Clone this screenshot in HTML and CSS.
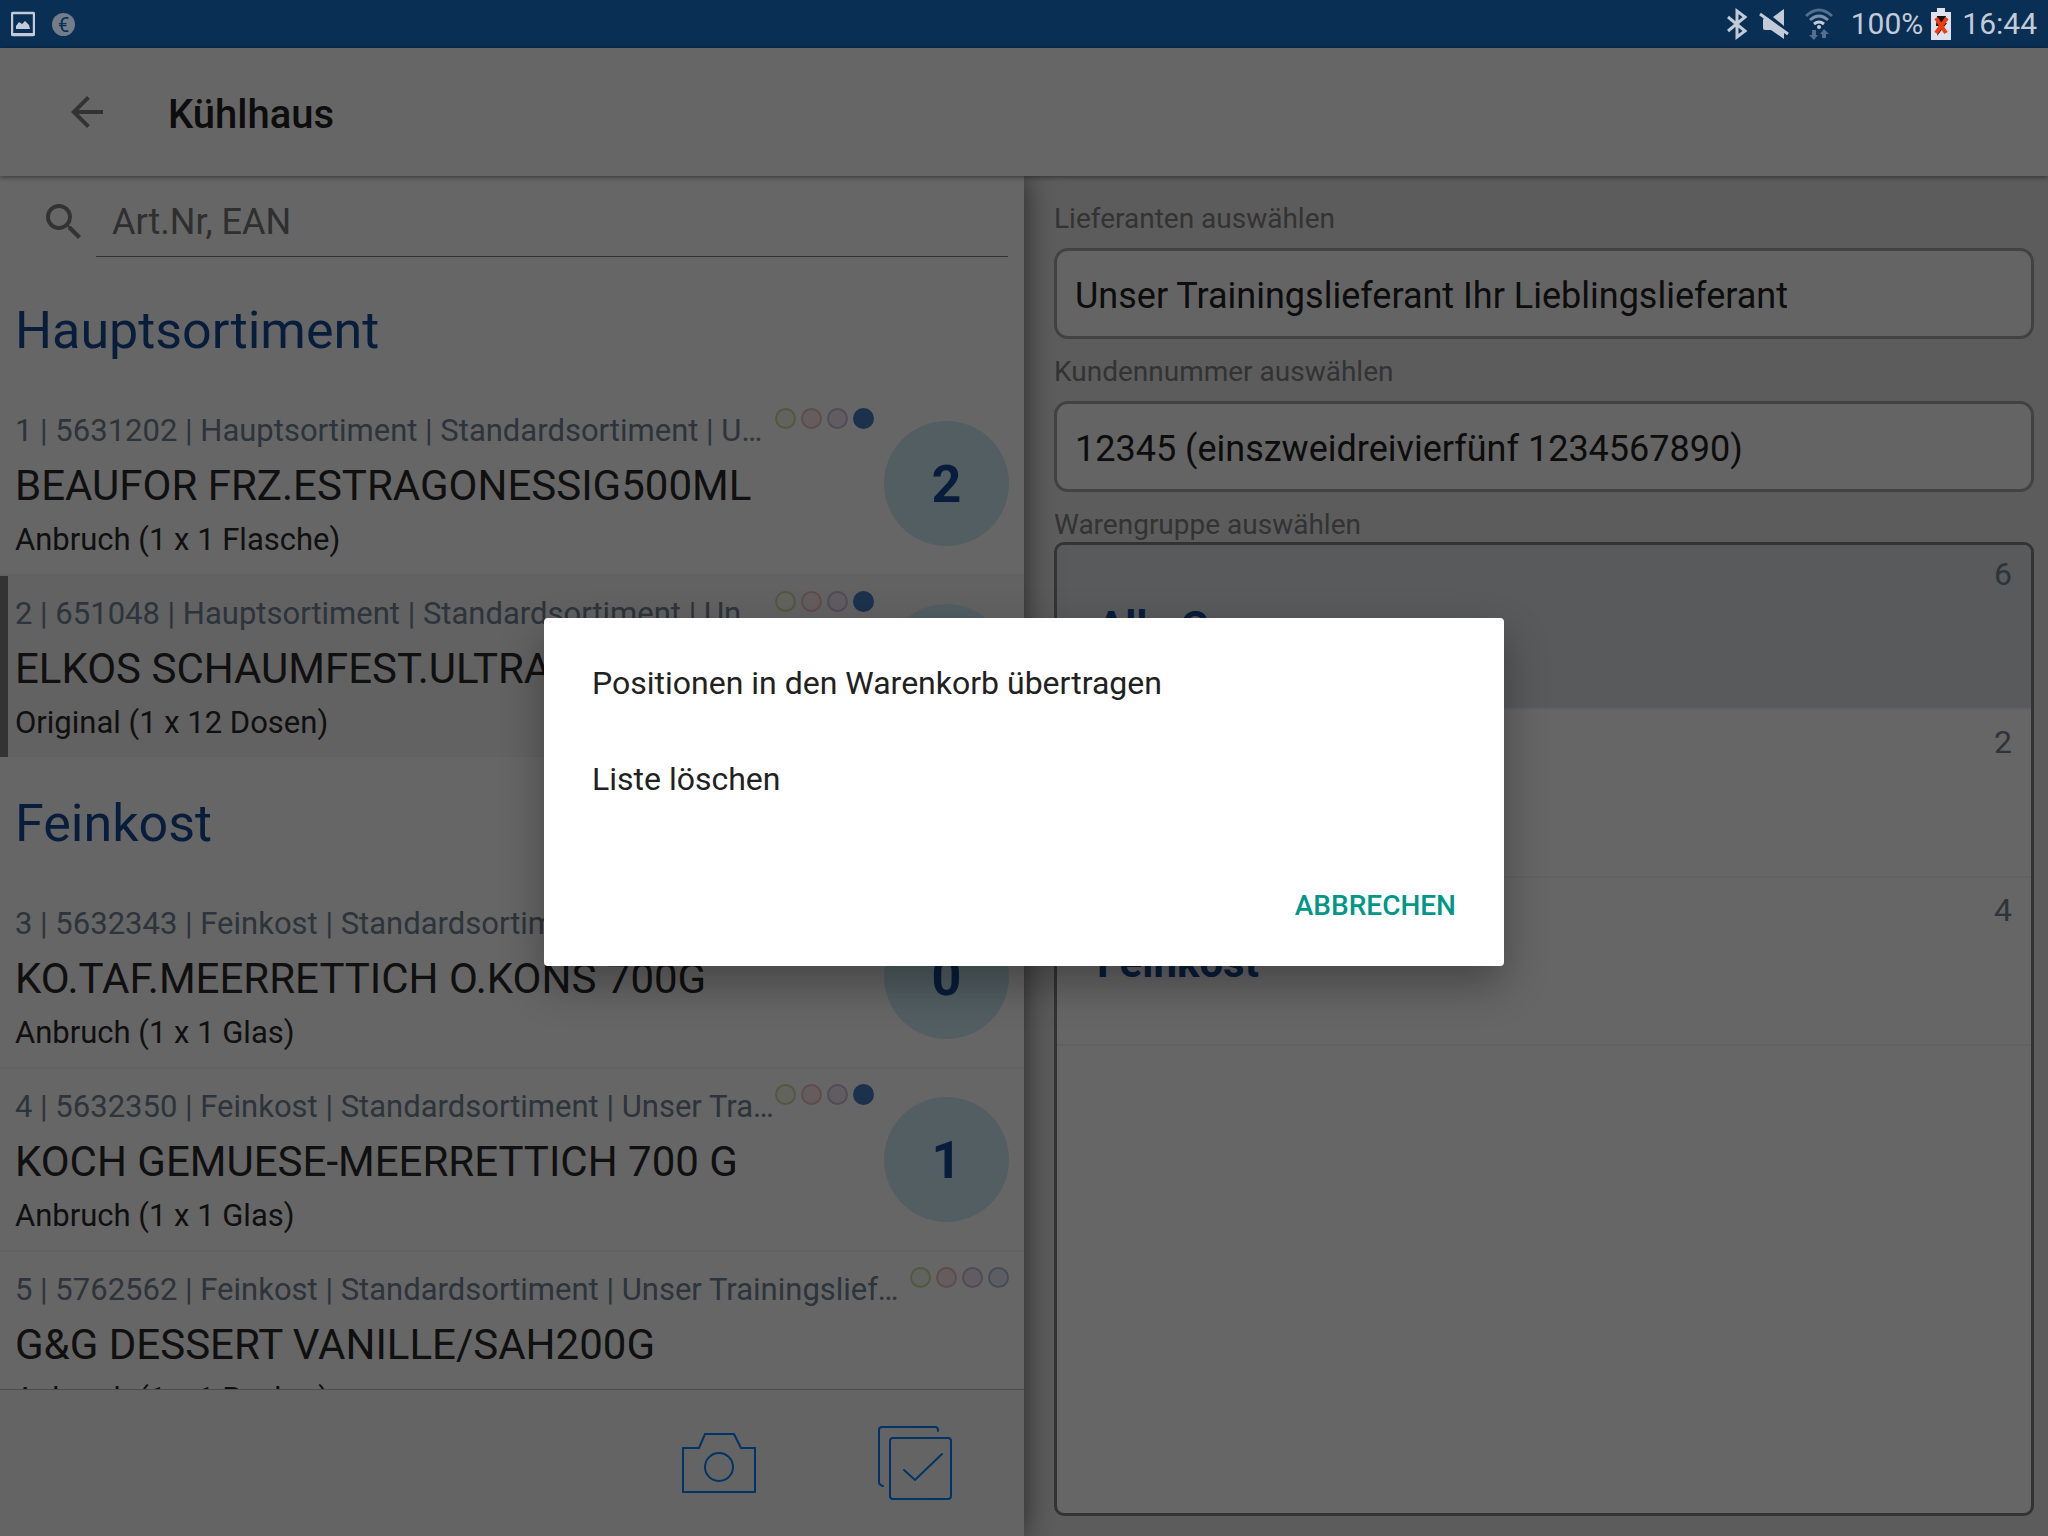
FILE: index.html
```html
<!DOCTYPE html>
<html lang="de">
<head>
    <meta charset="UTF-8">
    <meta name="viewport" content="width=device-width, initial-scale=1.0">
    <title>Kühlhaus</title>
    <link rel="stylesheet" href="styles.css">
</head>
<body>
    <div class="statusbar">
        <svg class="icon-picture" width="24" height="26" viewBox="0 0 24 26" fill="none">
            <rect x="1" y="2" width="22" height="22" rx="1" stroke="#c3cbd9" stroke-width="2.4"/>
            <path d="M1 22h22v3H1z" fill="#c3cbd9"/>
            <path d="M5 18v-3l3-4 3 2 3-3 4 4 1 4z" fill="#c3cbd9"/>
        </svg>
        <span class="euro">€</span>
        <div class="status-right">
            <svg width="22" height="32" viewBox="0 0 22 32" fill="none" stroke="#c3cbd9" stroke-width="3">
                <path d="M2 9l17 14-8 6V3l8 6L2 23"/>
            </svg>
            <svg class="icon-mute" width="30" height="32" viewBox="0 0 30 32">
                <path d="M25 1v17L14 9z" fill="#c3cbd9"/>
                <path d="M5 10h4l16 13v8L12 22H6q-2 0-2-2v-8z" fill="#c3cbd9"/>
                <path d="M1 6l28 20" stroke="#c3cbd9" stroke-width="3"/>
            </svg>
            <svg class="icon-wifi" width="28" height="32" viewBox="0 0 28 32" fill="none" stroke-width="3">
                <path d="M1 8q13-12 26 0" stroke="#536f8d"/>
                <path d="M5 12q9-8 18 0" stroke="#7b90a8"/>
                <path d="M9 16q5-4 10 0" stroke="#c3cbd9"/>
                <circle cx="14" cy="19" r="2" fill="#c3cbd9"/>
                <path d="M7 22h4v5h2l-4 5-5-5h3zM17 30h4v-4h3l-5-5-4 5h2z" fill="#536f8d"/>
            </svg>
            <span class="battery-text">100%</span>
            <svg class="icon-battery" width="20" height="32" viewBox="0 0 20 32">
                <path d="M6 0h8v4h6v28H0V4h6z" fill="#dde2ec"/>
                <path d="M6 8h9l-2 7h3L6 28l2-10H5z" fill="#111"/>
                <path d="M5 10l10 15M16 10L5 25" stroke="#f03a12" stroke-width="4"/>
            </svg>
            <span>16:44</span>
        </div>
    </div>

    <div class="app">
        <header class="toolbar">
            <button class="back" aria-label="Zurück">
                <svg width="48" height="48" viewBox="0 0 24 24" fill="#808080"><path d="M20 11H7.83l5.59-5.59L12 4l-8 8 8 8 1.41-1.41L7.83 13H20v-2z"/></svg>
            </button>
            <h1>Kühlhaus</h1>
        </header>

        <main class="panes">
            <section class="left">
                <div class="search">
                    <svg width="48" height="48" viewBox="0 0 24 24" fill="#808080"><path d="M15.5 14h-.79l-.28-.27A6.47 6.47 0 0 0 16 9.5 6.5 6.5 0 1 0 9.5 16c1.61 0 3.09-.59 4.23-1.57l.27.28v.79l5 4.99L20.49 19l-4.99-5zm-6 0C7.01 14 5 11.99 5 9.5S7.01 5 9.5 5 14 7.01 14 9.5 11.99 14 9.5 14z"/></svg>
                    <input type="text" placeholder="Art.Nr, EAN" aria-label="Art.Nr, EAN">
                </div>
                <div class="list">
                    <h2>Hauptsortiment</h2>
                    <article class="item">
                        <div class="info">
                            <div class="meta">
                                <span>1 | 5631202 | Hauptsortiment | Standardsortiment | Unser Trainingslieferant</span>
                                <div class="dots"><i class="green"></i><i class="red"></i><i class="purple"></i><i class="blue full"></i></div>
                            </div>
                            <h3>BEAUFOR FRZ.ESTRAGONESSIG500ML</h3>
                            <p>Anbruch (1 x 1 Flasche)</p>
                        </div>
                        <div class="amount">2</div>
                    </article>
                    <article class="item selected">
                        <div class="info">
                            <div class="meta">
                                <span>2 | 651048 | Hauptsortiment | Standardsortiment | Unser Trainingslieferant</span>
                                <div class="dots"><i class="green"></i><i class="red"></i><i class="purple"></i><i class="blue full"></i></div>
                            </div>
                            <h3>ELKOS SCHAUMFEST.ULTRA</h3>
                            <p>Original (1 x 12 Dosen)</p>
                        </div>
                        <div class="amount">1</div>
                    </article>
                    <h2>Feinkost</h2>
                    <article class="item">
                        <div class="info">
                            <div class="meta">
                                <span>3 | 5632343 | Feinkost | Standardsortiment | Unser Trainingslieferant</span>
                                <div class="dots"><i class="green"></i><i class="red"></i><i class="purple"></i><i class="blue full"></i></div>
                            </div>
                            <h3>KO.TAF.MEERRETTICH O.KONS 700G</h3>
                            <p>Anbruch (1 x 1 Glas)</p>
                        </div>
                        <div class="amount">0</div>
                    </article>
                    <article class="item">
                        <div class="info">
                            <div class="meta">
                                <span>4 | 5632350 | Feinkost | Standardsortiment | Unser Trainingslieferant</span>
                                <div class="dots"><i class="green"></i><i class="red"></i><i class="purple"></i><i class="blue full"></i></div>
                            </div>
                            <h3>KOCH GEMUESE-MEERRETTICH 700 G</h3>
                            <p>Anbruch (1 x 1 Glas)</p>
                        </div>
                        <div class="amount">1</div>
                    </article>
                    <article class="item">
                        <div class="info">
                            <div class="meta">
                                <span>5 | 5762562 | Feinkost | Standardsortiment | Unser Trainingslieferant</span>
                                <div class="dots"><i class="green"></i><i class="red"></i><i class="purple"></i><i class="blue"></i></div>
                            </div>
                            <h3>G&amp;G DESSERT VANILLE/SAH200G</h3>
                            <p>Anbruch (1 x 1 Becher)</p>
                        </div>
                    </article>
                </div>
                <div class="actions">
                    <button aria-label="Kamera">
                        <svg width="74" height="74" viewBox="0 0 74 74" fill="none" stroke="#0080ff" stroke-width="2"><path d="M1 22h16l6-14h29l7 14h14v44H1z"/><circle cx="37" cy="41" r="14"/></svg>
                    </button>
                    <button aria-label="Auswahl">
                        <svg width="74" height="74" viewBox="0 0 74 74" fill="none" stroke="#0080ff" stroke-width="2" stroke-linecap="round"><rect x="12" y="12" width="61" height="61" rx="3"/><path d="M60 5V4q0-3-3-3H4Q1 1 1 4v52q0 3 4 4"/><path d="M26 44l11 10 27-26"/></svg>
                    </button>
                </div>
            </section>

            <section class="right">
                <label for="lieferant">Lieferanten auswählen</label>
                <select id="lieferant"><option>Unser Trainingslieferant Ihr Lieblingslieferant</option></select>
                <label for="kunde">Kundennummer auswählen</label>
                <select id="kunde"><option>12345 (einszweidreivierfünf 1234567890)</option></select>
                <div class="label">Warengruppe auswählen</div>
                <div class="groups">
                    <button class="group active"><span class="count">6</span><b>Alle Gruppen</b></button>
                    <button class="group"><span class="count">2</span><b>Hauptsortiment</b></button>
                    <button class="group"><span class="count">4</span><b>Feinkost</b></button>
                </div>
            </section>
        </main>

        <div class="overlay">
            <div class="dialog" role="dialog" aria-modal="true">
                <button class="option">Positionen in den Warenkorb übertragen</button>
                <button class="option">Liste löschen</button>
                <div class="dialog-actions">
                    <button class="cancel">ABBRECHEN</button>
                </div>
            </div>
        </div>
    </div>
</body>
</html>
```
FILE: styles.css
```css
* {
    box-sizing: border-box;
}
body {
    margin: 0;
    height: 100vh;
    display: flex;
    flex-direction: column;
    font-family: Roboto, sans-serif;
    color: #2a2a2a;
    overflow: hidden;
}
h1, h2, h3, p {
    margin: 0;
    font-weight: 400;
}
button {
    padding: 0;
    border: none;
    background: none;
    font-family: inherit;
    cursor: pointer;
}
svg {
    display: block;
    flex: none;
}

/* Statusleiste */
.statusbar {
    height: 48px;
    flex: none;
    display: flex;
    align-items: center;
    padding: 0 11px;
    background: #0a2f55;
    color: #c3cbd9;
    font-size: 30px;
    line-height: 48px;
}
.euro {
    width: 23px;
    height: 23px;
    margin-left: 17px;
    border-radius: 50%;
    background: #727d89;
    color: #0a2f55;
    font-size: 20px;
    line-height: 24px;
    text-align: center;
}
.status-right {
    display: flex;
    align-items: center;
    margin-left: auto;
}
.icon-mute {
    margin-left: 11px;
}
.icon-wifi {
    margin-left: 16px;
}
.battery-text {
    margin-left: 18px;
}
.icon-battery {
    margin: 0 11px 0 8px;
}

/* Kopfzeile */
.app {
    position: relative;
    flex: 1;
    min-height: 0;
    display: flex;
    flex-direction: column;
}
.toolbar {
    position: relative;
    z-index: 2;
    height: 128px;
    flex: none;
    display: flex;
    align-items: center;
    padding-left: 63px;
    background: #fff;
    box-shadow: 0 1px 5px rgba(0, 0, 0, 0.5);
}
.toolbar h1 {
    margin-left: 57px;
    padding-top: 5px;
    font-size: 40px;
    font-weight: 500;
    color: #222;
}
.panes {
    flex: 1;
    min-height: 0;
    display: grid;
    grid-template-columns: 1fr 1fr;
}

/* Artikelliste */
.left {
    position: relative;
    z-index: 1;
    display: flex;
    flex-direction: column;
    min-width: 0;
    min-height: 0;
    background: #fff;
    box-shadow: 0 0 28px rgba(0, 0, 0, 0.6);
}
.search {
    flex: none;
    display: flex;
    align-items: center;
    gap: 8px;
    padding: 11px 16px 7px 40px;
}
.search input {
    flex: 1;
    height: 70px;
    padding: 0 16px;
    border: none;
    border-bottom: 1px solid #808080;
    background: none;
    font-family: inherit;
    font-size: 36px;
}
.search input::placeholder {
    color: #757575;
}
.list {
    flex: 1;
    min-height: 0;
    overflow: hidden;
}
.list h2 {
    padding: 7px 15px 0;
    font-size: 52px;
    line-height: 120px;
    color: #144a94;
}
.item {
    display: flex;
    gap: 10px;
    padding: 18px 15px 17px;
    border-top: 2px solid #f4f4f4;
}
.item.selected {
    background: #f4f4f4;
    box-shadow: inset 8px 0 #808080;
}
.list h2 + .item {
    border-color: transparent;
}
.info {
    flex: 1;
    min-width: 0;
    display: flex;
    flex-direction: column;
    gap: 6px;
}
.meta {
    display: flex;
    height: 38px;
    font-size: 31px;
    line-height: 40px;
    color: #708294;
}
.meta span {
    flex: 1;
    overflow: hidden;
    white-space: nowrap;
    text-overflow: ellipsis;
}
.dots {
    display: flex;
    gap: 5px;
    margin-top: -3px;
}
.dots i {
    width: 21px;
    height: 21px;
    border: 2px solid;
    border-radius: 50%;
}
.dots .green {
    border-color: #c9dc9a;
    background: #f4f7ea;
}
.dots .red {
    border-color: #eebcc0;
    background: #fbe9ea;
}
.dots .purple {
    border-color: #cdb8da;
    background: #efe8f4;
}
.dots .blue {
    border-color: #a9bfe0;
    background: #e6ecf5;
}
.dots .full {
    border-color: #487ac4;
    background: #487ac4;
}
.item h3 {
    font-size: 42px;
    line-height: 62px;
    white-space: nowrap;
}
.item p {
    font-size: 31px;
    line-height: 34px;
}
.amount {
    width: 125px;
    height: 125px;
    flex: none;
    margin-top: 10px;
    border-radius: 50%;
    background: #cdeaf4;
    color: #144a94;
    font-size: 52px;
    font-weight: 700;
    line-height: 128px;
    text-align: center;
}
.actions {
    flex: none;
    display: flex;
    justify-content: flex-end;
    gap: 122px;
    padding: 36px 72px 36px;
    border-top: 1px solid #c0c0c0;
    background: #fafafa;
}

/* Auswahl */
.right {
    display: flex;
    flex-direction: column;
    min-width: 0;
    padding: 26px 14px 20px 30px;
    background: #e6e6e6;
}
.right label,
.label {
    font-size: 28px;
    line-height: 33px;
    color: #808080;
}
.right select {
    height: 91px;
    margin: 13px 0 16px;
    padding: 4px 18px 0;
    border: 3px solid #a5a5a5;
    border-radius: 14px;
    background: #fafafa;
    color: #222;
    font-family: inherit;
    font-size: 36px;
    appearance: none;
}
.groups {
    flex: 1;
    margin-top: 1px;
    border: 3px solid #808080;
    border-radius: 10px;
    background: #fff;
    overflow: hidden;
}
.group {
    display: flex;
    flex-direction: column;
    width: 100%;
    height: 168px;
    padding: 13px 19px 0 40px;
    border-bottom: 2px solid #f4f4f4;
    color: #144a94;
    font-size: 42px;
    line-height: 50px;
    text-align: left;
}
.group.active {
    height: 165px;
    padding-top: 10px;
    background: #dce0e4;
}
.count {
    align-self: flex-end;
    color: #708294;
    font-size: 32px;
    line-height: 38px;
    margin-bottom: 9px;
}

/* Dialog */
.overlay {
    position: absolute;
    inset: 0;
    z-index: 3;
    display: flex;
    align-items: center;
    justify-content: center;
    background: rgba(0, 0, 0, 0.6);
}
.dialog {
    width: 960px;
    max-width: 90%;
    padding: 16px 0;
    border-radius: 4px;
    background: #fff;
    box-shadow: 0 18px 44px rgba(0, 0, 0, 0.32);
}
.option {
    display: block;
    width: 100%;
    height: 96px;
    padding: 2px 48px 0;
    color: #212121;
    font-size: 32px;
    text-align: left;
}
.dialog-actions {
    display: flex;
    justify-content: flex-end;
    padding: 32px 48px 0;
}
.cancel {
    height: 92px;
    padding-top: 2px;
    color: #009688;
    font-size: 28px;
    font-weight: 500;
}
```
